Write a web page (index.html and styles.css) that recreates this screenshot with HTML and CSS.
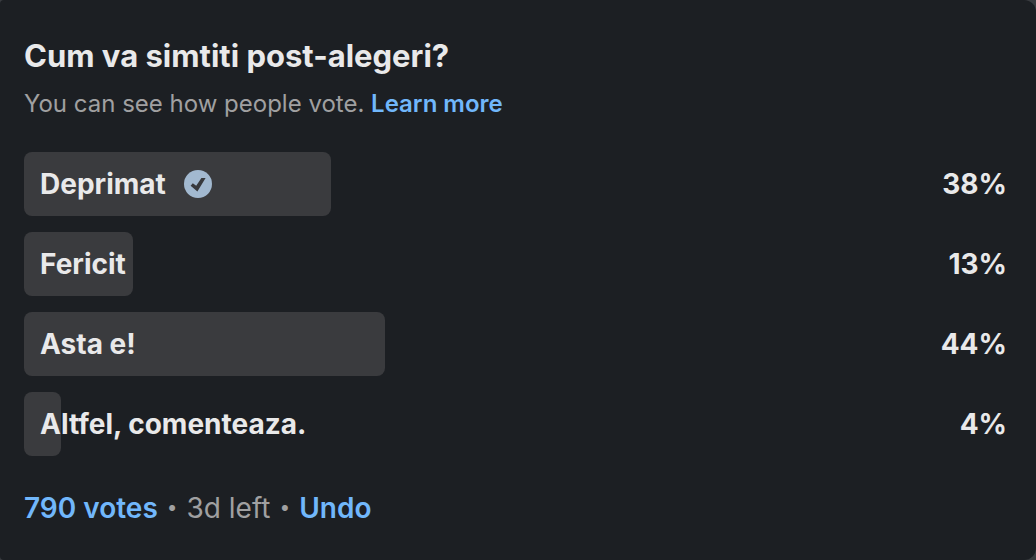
FILE: index.html
```html
<!DOCTYPE html>
<html lang="ro">
<head>
<meta charset="utf-8">
<meta name="viewport" content="width=device-width, initial-scale=1">
<title>Cum va simtiti post-alegeri?</title>
<link rel="stylesheet" href="styles.css">
</head>
<body>
<main class="poll">
  <h1 class="poll-title">Cum va simtiti post-alegeri?</h1>
  <p class="poll-note">You can see how people vote. <a class="link" href="#learn">Learn more</a></p>
  <ul class="results">
    <li class="result">
      <div class="track">
        <div class="bar" style="width: 37.7%"></div>
        <span class="label">Deprimat</span>
        <svg class="check" viewBox="0 0 28 28" role="img" aria-label="Your vote">
          <circle cx="14" cy="14" r="14" fill="#a2b9d0"/>
          <path d="M17.4 8H21.6L13.4 21.6L6.6 15.8L8.8 13.2L12.2 15.8Z" fill="#37393d"/>
        </svg>
      </div>
      <span class="value">38%</span>
    </li>
    <li class="result">
      <div class="track">
        <div class="bar" style="width: 13.4%"></div>
        <span class="label">Fericit</span>
      </div>
      <span class="value">13%</span>
    </li>
    <li class="result">
      <div class="track">
        <div class="bar" style="width: 44.3%"></div>
        <span class="label">Asta e!</span>
      </div>
      <span class="value">44%</span>
    </li>
    <li class="result">
      <div class="track">
        <div class="bar" style="width: 4.5%"></div>
        <span class="label">Altfel, comenteaza.</span>
      </div>
      <span class="value">4%</span>
    </li>
  </ul>
  <footer class="poll-footer">
    <a class="link" href="#votes">790 votes</a>
    <span class="dot">•</span>
    <span>3d left</span>
    <span class="dot">•</span>
    <button class="link undo" type="button">Undo</button>
  </footer>
</main>
</body>
</html>
```
FILE: styles.css
```css
* {
  box-sizing: border-box;
}

body {
  margin: 0;
  background: #3a3c40;
  color: #e9e9ea;
  font-family: Inter, "Liberation Sans", sans-serif;
}

.poll {
  min-height: 100vh;
  padding: 36px 29px 32px 24px;
  border-radius: 4px 12px 12px 4px;
  background: #1c1f23;
}

.poll-title {
  margin: 0;
  font-size: 31px;
  font-weight: 650;
  line-height: 40px;
}

.poll-note {
  margin: 12px 0 0;
  color: #a0a0a1;
  font-size: 24px;
  line-height: 32px;
}

.link {
  color: #71b7fb;
  font-weight: 600;
  text-decoration: none;
}

.results {
  display: flex;
  flex-direction: column;
  gap: 16px;
  margin: 32px 0 0;
  padding: 0;
  list-style: none;
}

.result {
  display: flex;
  align-items: center;
  font-size: 28px;
  font-weight: 650;
  line-height: 40px;
}

.track {
  position: relative;
  display: flex;
  flex: 1;
  align-items: center;
  gap: 18px;
  height: 64px;
  padding-left: 16px;
}

.bar {
  position: absolute;
  inset: 0 auto 0 0;
  border-radius: 8px;
  background: #3a3b3e;
}

.label,
.check {
  position: relative;
}

.check {
  width: 28px;
  height: 28px;
}

.value {
  width: 169px;
  text-align: right;
}

.poll-footer {
  display: flex;
  align-items: center;
  gap: 9px;
  margin-top: 32px;
  color: #a0a0a1;
  font-size: 28px;
  line-height: 40px;
}

.dot {
  font-size: 19px;
}

.undo {
  padding: 0;
  border: 0;
  background: none;
  font-family: inherit;
  font-size: inherit;
  line-height: inherit;
  cursor: pointer;
}
```
